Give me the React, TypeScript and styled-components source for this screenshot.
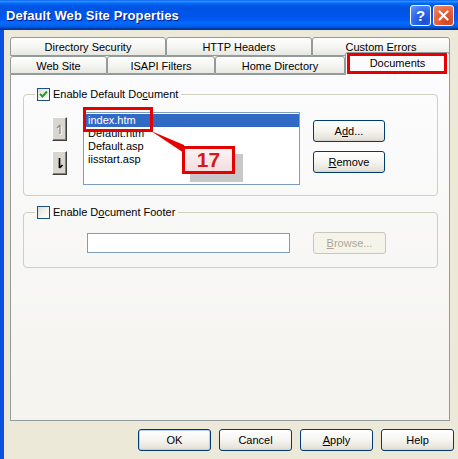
import React from "react";
import styled, { createGlobalStyle } from "styled-components";

const GlobalStyle = createGlobalStyle`
  html, body { margin: 0; padding: 0; background: #ece9d8; }
  body { font-family: "Liberation Sans", Arial, sans-serif; font-size: 11px; color: #000; }
  * { box-sizing: border-box; }
`;

const Window = styled.div`
  width: 458px;
  height: 459px;
  overflow: hidden;
  background: #ece9d8;
`;

const TitleBar = styled.div`
  height: 30px;
  display: flex;
  align-items: center;
  justify-content: space-between;
  padding: 0 4px 0 6px;
  background: linear-gradient(
    to bottom,
    #0058ee 0%,
    #3593ff 4%,
    #288eff 6%,
    #127dff 8%,
    #036ffc 10%,
    #0262ee 14%,
    #0057e5 20%,
    #0054e3 24%,
    #0055eb 56%,
    #005bf5 66%,
    #026afe 76%,
    #0062ef 86%,
    #0052d6 92%,
    #0040ab 94%,
    #003092 100%
  );
`;

const Title = styled.div`
  color: #fff;
  font-weight: bold;
  font-size: 13px;
  letter-spacing: 0.1px;
  text-shadow: 1px 1px #0a1883;
`;

const TitleButtons = styled.div`
  display: flex;
  gap: 2px;
`;

const CaptionButton = styled.div<{ $close?: boolean }>`
  width: 21px;
  height: 21px;
  border: 1px solid #fff;
  border-radius: 3px;
  display: flex;
  align-items: center;
  justify-content: center;
  color: #fff;
  font-weight: bold;
  font-size: 15px;
  background: ${(p) =>
    p.$close
      ? "radial-gradient(circle at 70% 80%, #cc4622 0%, #e5603a 50%, #f0906c 100%)"
      : "radial-gradient(circle at 70% 80%, #1a4bd6 0%, #2f6cf0 55%, #6c9ef7 100%)"};
`;

const Body = styled.div`
  height: 429px;
  border-left: 4px solid #0a4fe0;
  padding: 7px 0 0 6px;
`;

const TabStrip = styled.div`
  width: 440px;
`;

const TabRow = styled.div<{ $h: number }>`
  display: flex;
  align-items: flex-end;
  height: ${(p) => p.$h}px;
`;

const Tab = styled.div<{ $w: number; $active?: boolean }>`
  position: relative;
  width: ${(p) => p.$w}px;
  height: ${(p) => (p.$active ? "23px" : "100%")};
  margin-bottom: ${(p) => (p.$active ? "-1px" : "0")};
  z-index: ${(p) => (p.$active ? 2 : 1)};
  border: 1px solid #919b9c;
  border-bottom: ${(p) => (p.$active ? "none" : "1px solid #919b9c")};
  border-radius: 3px 3px 0 0;
  background: ${(p) =>
    p.$active ? "#fcfcfe" : "linear-gradient(to bottom, #ffffff 0%, #f3f3ef 60%, #e8e7e1 100%)"};
  display: flex;
  align-items: center;
  justify-content: center;
  padding-top: ${(p) => (p.$active ? "0" : "1px")};
  padding-bottom: ${(p) => (p.$active ? "3px" : "0")};
  white-space: nowrap;
`;

const TabMark = styled.div`
  position: absolute;
  left: 1px;
  top: 0;
  width: 100px;
  height: 21px;
  border: 3px solid #e60000;
`;

const Panel = styled.div`
  position: relative;
  height: 347px;
  border: 1px solid #919b9c;
  background: linear-gradient(to bottom, #fcfcfe, #f4f3ee);
  padding: 12px 11px 0 12px;
`;

const Group = styled.fieldset<{ $gap?: number }>`
  margin: ${(p) => p.$gap ?? 0}px 0 0 0;
  padding: 0;
  border: 1px solid #d0d0bf;
  border-radius: 4px;
  min-width: 0;
`;

const Legend = styled.legend`
  margin-left: 11px;
  padding: 0 3px 0 2px;
  height: 14px;
  display: flex;
  align-items: center;
  gap: 3px;
  white-space: nowrap;
`;

const Check = styled.span`
  width: 13px;
  height: 13px;
  border: 1px solid #1c5180;
  background: linear-gradient(135deg, #dcdcd7 0%, #f5f5f1 60%, #ffffff 100%);
  display: flex;
  align-items: center;
  justify-content: center;
`;

const Key = styled.span`
  text-decoration: underline;
`;

const GroupBody = styled.div<{ $h: number }>`
  height: ${(p) => p.$h}px;
  display: flex;
  align-items: flex-start;
`;

const ArrowCol = styled.div`
  margin: 16px 0 0 28px;
  display: flex;
  flex-direction: column;
  gap: 10px;
`;

const ArrowButton = styled.div`
  width: 15px;
  height: 24px;
  background: #d9d6cf;
  border: 1px solid;
  border-color: #ffffff #404040 #404040 #ffffff;
  box-shadow: inset -1px -1px #808080;
  display: flex;
  align-items: center;
  justify-content: center;
`;

const ListBox = styled.div`
  margin: 11px 0 0 16px;
  width: 217px;
  height: 73px;
  border: 1px solid #7f9db9;
  background: #fff;
  padding: 1px 0 0 0;
`;

const ListItem = styled.div<{ $sel?: boolean }>`
  height: 13px;
  line-height: 13px;
  padding-left: 4px;
  background: ${(p) => (p.$sel ? "#316ac5" : "transparent")};
  color: ${(p) => (p.$sel ? "#fff" : "#000")};
`;

const ButtonCol = styled.div`
  margin: 19px 0 0 13px;
  display: flex;
  flex-direction: column;
  gap: 9px;
`;

const XPButton = styled.div<{ $w?: number; $default?: boolean; $disabled?: boolean }>`
  width: ${(p) => p.$w ?? 72}px;
  height: 22px;
  border: 1px solid ${(p) => (p.$disabled ? "#c9c7ba" : "#003c74")};
  border-radius: 3px;
  background: ${(p) =>
    p.$disabled ? "#f5f4ea" : "linear-gradient(to bottom, #ffffff 0%, #f5f4f0 50%, #e6e3da 90%, #d6d0c5 100%)"};
  box-shadow: ${(p) => (p.$default ? "inset 0 0 0 1px #b7cff2" : "none")};
  color: ${(p) => (p.$disabled ? "#aca899" : "#000")};
  display: flex;
  align-items: center;
  justify-content: center;
`;

const TextBox = styled.div`
  margin: 14px 0 0 63px;
  width: 203px;
  height: 20px;
  border: 1px solid #7f9db9;
  background: #fff;
`;

const BrowseWrap = styled.div`
  margin: 13px 0 0 23px;
`;

const Callout = styled.div`
  position: absolute;
  left: 171px;
  top: 71px;
  width: 53px;
  height: 28px;
  border: 3px solid #e60000;
  background: linear-gradient(to bottom, #fdf3f3, #f2dede);
  box-shadow: 8px 8px 0 #c8c8c8;
  color: #d81818;
  font-weight: bold;
  font-size: 21px;
  display: flex;
  align-items: center;
  justify-content: center;
`;

const ItemMark = styled.div`
  position: absolute;
  left: 72px;
  top: 32px;
  width: 70px;
  height: 25px;
  border: 3px solid #e60000;
`;

const Pointer = styled.svg`
  position: absolute;
  left: 0;
  top: 0;
  overflow: visible;
`;

const Footer = styled.div`
  display: flex;
  justify-content: flex-end;
  gap: 8px;
  padding: 8px 4px 0 0;
`;

const tabsBack = [
  { label: "Directory Security", w: 156 },
  { label: "HTTP Headers", w: 146 },
  { label: "Custom Errors", w: 138 },
];

const tabsFront = [
  { label: "Web Site", w: 97 },
  { label: "ISAPI Filters", w: 108 },
  { label: "Home Directory", w: 130 },
];

const docs = ["index.htm", "Default.htm", "Default.asp", "iisstart.asp"];

const App = () => {
  return (
    <Window>
      <GlobalStyle />
      <TitleBar>
        <Title>Default Web Site Properties</Title>
        <TitleButtons>
          <CaptionButton>?</CaptionButton>
          <CaptionButton $close>
            <svg width="11" height="11" viewBox="0 0 11 11">
              <path d="M1.5 1.5 L9.5 9.5 M9.5 1.5 L1.5 9.5" stroke="#fff" strokeWidth="2.2" strokeLinecap="round" />
            </svg>
          </CaptionButton>
        </TitleButtons>
      </TitleBar>

      <Body>
        <TabStrip>
          <TabRow $h={19}>
            {tabsBack.map((t) => (
              <Tab key={t.label} $w={t.w}>
                {t.label}
              </Tab>
            ))}
          </TabRow>
          <TabRow $h={18}>
            {tabsFront.map((t) => (
              <Tab key={t.label} $w={t.w}>
                {t.label}
              </Tab>
            ))}
            <Tab $w={105} $active>
              Documents
              <TabMark />
            </Tab>
          </TabRow>

          <Panel>
            {/* Default document */}
            <Group>
              <Legend>
                <Check>
                  <svg width="9" height="9" viewBox="0 0 9 9">
                    <path d="M1 4 L3.5 6.5 L8 1.5" stroke="#21a121" strokeWidth="2" fill="none" />
                  </svg>
                </Check>
                <span>
                  Enable Default Do<Key>c</Key>ument
                </span>
              </Legend>
              <GroupBody $h={94}>
                <ArrowCol>
                  <ArrowButton>
                    <svg width="9" height="13" viewBox="0 0 9 13">
                      <path d="M5 2 V11 M5 2 L2 5 M5 2 L5 5" stroke="#fff" strokeWidth="1.3" fill="none" transform="translate(1 1)" />
                      <path d="M5 2 V11 M5 2 L2 5 M5 2 L5 5" stroke="#8c8a84" strokeWidth="1.3" fill="none" />
                    </svg>
                  </ArrowButton>
                  <ArrowButton>
                    <svg width="9" height="13" viewBox="0 0 9 13">
                      <path d="M4.5 1 V11 M4.5 11 L7.5 8 M4.5 11 L4.5 8" stroke="#000" strokeWidth="1.7" fill="none" />
                    </svg>
                  </ArrowButton>
                </ArrowCol>
                <ListBox>
                  {docs.map((d, i) => (
                    <ListItem key={d} $sel={i === 0}>
                      {d}
                    </ListItem>
                  ))}
                </ListBox>
                <ButtonCol>
                  <XPButton>
                    <span>
                      A<Key>d</Key>d...
                    </span>
                  </XPButton>
                  <XPButton>
                    <span>
                      <Key>R</Key>emove
                    </span>
                  </XPButton>
                </ButtonCol>
              </GroupBody>
            </Group>

            {/* Document footer */}
            <Group $gap={9}>
              <Legend>
                <Check />
                <span>
                  Enable D<Key>o</Key>cument Footer
                </span>
              </Legend>
              <GroupBody $h={48}>
                <TextBox />
                <BrowseWrap>
                  <XPButton $w={73} $disabled>
                    <span>
                      <Key>B</Key>rowse...
                    </span>
                  </XPButton>
                </BrowseWrap>
              </GroupBody>
            </Group>

            {/* annotation */}
            <ItemMark />
            <Pointer width="1" height="1">
              <polygon points="140,56 173,70 173,78" fill="#e60000" />
            </Pointer>
            <Callout>17</Callout>
          </Panel>
        </TabStrip>

        <Footer>
          <XPButton $w={73} $default>OK</XPButton>
          <XPButton $w={73}>Cancel</XPButton>
          <XPButton $w={73}>
            <span>
              <Key>A</Key>pply
            </span>
          </XPButton>
          <XPButton $w={73}>Help</XPButton>
        </Footer>
      </Body>
    </Window>
  );
};

export default App;
